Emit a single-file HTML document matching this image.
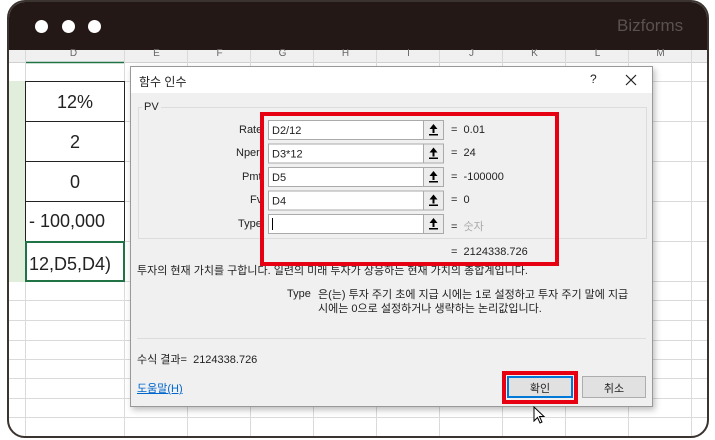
<!DOCTYPE html>
<html><head><meta charset="utf-8"><style>
*{margin:0;padding:0;box-sizing:border-box}
body{width:715px;height:440px;background:#fff;position:relative;overflow:hidden;font-family:"Liberation Sans","Noto Sans CJK KR",sans-serif}
.a{position:absolute}
.frame{left:7px;top:0;width:702px;height:438px;border:2px solid #3a3330;border-radius:18px;overflow:hidden;background:#fff}
.t{font-size:11px;color:#222}
.ch{position:absolute;top:46px;font-size:10px;color:#666;width:63px;text-align:center}
</style></head><body>
<div class="a frame">
 <div class="a" style="left:0;top:0;width:700px;height:48px;background:#231815"></div>
 <div class="a" style="left:26px;top:18px;width:13px;height:13px;border-radius:50%;background:#fff"></div>
 <div class="a" style="left:53px;top:18px;width:13px;height:13px;border-radius:50%;background:#fff"></div>
 <div class="a" style="left:79px;top:18px;width:13px;height:13px;border-radius:50%;background:#fff"></div>
 <div class="a" style="left:608px;top:14px;font-size:17px;color:#5a5250">Bizforms</div>
 <div class="a" style="left:0;top:48px;width:700px;height:13px;background:#f0f0f0;border-bottom:1px solid #d0d0d0"></div>
 <svg class="a" style="left:0;top:48px" width="700" height="390">
  <g stroke="#dadada" stroke-width="1">
   <line x1="115.5" y1="0" x2="115.5" y2="390"/><line x1="178.5" y1="0" x2="178.5" y2="390"/><line x1="241.5" y1="0" x2="241.5" y2="390"/><line x1="304.5" y1="0" x2="304.5" y2="390"/><line x1="367.5" y1="0" x2="367.5" y2="390"/><line x1="430.5" y1="0" x2="430.5" y2="390"/><line x1="493.5" y1="0" x2="493.5" y2="390"/><line x1="556.5" y1="0" x2="556.5" y2="390"/><line x1="619.5" y1="0" x2="619.5" y2="390"/><line x1="682.5" y1="0" x2="682.5" y2="390"/><line x1="16.5" y1="0" x2="16.5" y2="390"/>
   <line x1="0" y1="31.5" x2="700" y2="31.5"/><line x1="0" y1="71.5" x2="700" y2="71.5"/><line x1="0" y1="111.5" x2="700" y2="111.5"/><line x1="0" y1="151.5" x2="700" y2="151.5"/><line x1="0" y1="191.5" x2="700" y2="191.5"/><line x1="0" y1="231.5" x2="700" y2="231.5"/><line x1="0" y1="250.5" x2="700" y2="250.5"/><line x1="0" y1="270.5" x2="700" y2="270.5"/><line x1="0" y1="290.5" x2="700" y2="290.5"/><line x1="0" y1="309.5" x2="700" y2="309.5"/><line x1="0" y1="328.5" x2="700" y2="328.5"/><line x1="0" y1="348.5" x2="700" y2="348.5"/><line x1="0" y1="367.5" x2="700" y2="367.5"/>
  </g>
  <line x1="17" y1="12.5" x2="115" y2="12.5" stroke="#217346" stroke-width="1.5"/>
 </svg>
 <div class="a" style="left:0;top:79px;width:16px;height:201px;background:#e2eedc"></div>
 <div class="a" style="left:16px;top:79px;width:100px;height:161px;border:1px solid #222;background:#fff"></div>
 <div class="a" style="left:16px;top:119px;width:100px;height:1px;background:#222"></div>
 <div class="a" style="left:16px;top:159px;width:100px;height:1px;background:#222"></div>
 <div class="a" style="left:16px;top:199px;width:100px;height:1px;background:#222"></div>
 <div class="a" style="left:16px;top:239px;width:100px;height:41px;border:2px solid #217346;background:#fff"></div>
 <div class="a" style="left:16px;top:90px;width:100px;text-align:center;font-size:18px;color:#222">12%</div>
 <div class="a" style="left:16px;top:130px;width:100px;text-align:center;font-size:18px;color:#222">2</div>
 <div class="a" style="left:16px;top:170px;width:100px;text-align:center;font-size:18px;color:#222">0</div>
 <div class="a" style="left:20px;top:209px;font-size:18px;color:#222">- 100,000</div>
 <div class="a" style="left:20px;top:252px;font-size:18px;color:#222">12,D5,D4)</div>
 <div class="ch" style="left:33px">D</div><div class="ch" style="left:116px">E</div><div class="ch" style="left:179px">F</div><div class="ch" style="left:242px">G</div><div class="ch" style="left:305px">H</div><div class="ch" style="left:368px">I</div><div class="ch" style="left:431px">J</div><div class="ch" style="left:494px">K</div><div class="ch" style="left:557px">L</div><div class="ch" style="left:620px">M</div>
</div>
<div class="a" style="left:130px;top:66px;width:523px;height:341px;background:#f0f0f0;border:1px solid #999;box-shadow:2px 3px 6px rgba(0,0,0,.25)">
 <div class="a" style="left:0;top:0;width:521px;height:26px;background:#fff"></div>
 <div class="a t" style="left:8px;top:6px;font-size:12px">함수 인수</div>
 <div class="a t" style="left:459px;top:5px;font-size:12px">?</div>
 <svg class="a" style="left:494px;top:7px" width="12" height="12"><path d="M1 1L11 11M11 1L1 11" stroke="#222" stroke-width="1.2"/></svg>
 <div class="a" style="left:7px;top:40px;width:509px;height:132px;border:1px solid #dcdcdc"></div>
 <div class="a t" style="left:11px;top:34px;background:#f0f0f0;padding:0 2px">PV</div>
</div>
<div class="a t" style="left:239px;top:124px">Rate</div>
<div class="a t" style="left:236px;top:147px">Nper</div>
<div class="a t" style="left:242px;top:171px">Pmt</div>
<div class="a t" style="left:250px;top:194px">Fv</div>
<div class="a t" style="left:238px;top:218px">Type</div>
<svg class="a" style="left:268px;top:120px" width="176" height="120">
 <g font-family="Liberation Sans" font-size="11" fill="#222">
  <g><rect x="0.5" y="0.5" width="175" height="19" fill="#fff" stroke="#aaa"/><rect x="155.5" y="0.5" width="20" height="19" fill="#ececec" stroke="#aaa"/><text x="4" y="14">D2/12</text></g>
  <g transform="translate(0,23.5)"><rect x="0.5" y="0.5" width="175" height="19" fill="#fff" stroke="#aaa"/><rect x="155.5" y="0.5" width="20" height="19" fill="#ececec" stroke="#aaa"/><text x="4" y="14">D3*12</text></g>
  <g transform="translate(0,47)"><rect x="0.5" y="0.5" width="175" height="19" fill="#fff" stroke="#aaa"/><rect x="155.5" y="0.5" width="20" height="19" fill="#ececec" stroke="#aaa"/><text x="4" y="14">D5</text></g>
  <g transform="translate(0,70.5)"><rect x="0.5" y="0.5" width="175" height="19" fill="#fff" stroke="#aaa"/><rect x="155.5" y="0.5" width="20" height="19" fill="#ececec" stroke="#aaa"/><text x="4" y="14">D4</text></g>
  <g transform="translate(0,94)"><rect x="0.5" y="0.5" width="175" height="19" fill="#fff" stroke="#aaa"/><rect x="155.5" y="0.5" width="20" height="19" fill="#ececec" stroke="#aaa"/><line x1="4.5" y1="4" x2="4.5" y2="16" stroke="#000"/></g>
 </g>
 <g fill="#000"><g id="ar"><path d="M165.5 4 L161.5 9 L164.5 9 L164.5 13 L166.5 13 L166.5 9 L169.5 9 Z"/><rect x="161" y="14" width="9" height="1.5"/></g>
 <use href="#ar" y="23.5"/><use href="#ar" y="47"/><use href="#ar" y="70.5"/><use href="#ar" y="94"/></g>
</svg>
<div class="a t" style="left:451px;top:124px">=&nbsp; 0.01</div>
<div class="a t" style="left:451px;top:147px">=&nbsp; 24</div>
<div class="a t" style="left:451px;top:171px">=&nbsp; -100000</div>
<div class="a t" style="left:451px;top:194px">=&nbsp; 0</div>
<div class="a t" style="left:451px;top:218px">= <span style="color:#aaa">&nbsp;숫자</span></div>
<div class="a t" style="left:451px;top:246px">=&nbsp; 2124338.726</div>
<div class="a t" style="left:137px;top:262px">투자의 현재 가치를 구합니다. 일련의 미래 투자가 상응하는 현재 가치의 총합계입니다.</div>
<div class="a t" style="left:287px;top:288px">Type</div>
<div class="a t" style="left:318px;top:288px;line-height:14px;width:340px">은(는) 투자 주기 초에 지급 시에는 1로 설정하고 투자 주기 말에 지급<br>시에는 0으로 설정하거나 생략하는 논리값입니다.</div>
<div class="a" style="left:137px;top:338px;width:509px;height:1px;background:#dcdcdc"></div>
<div class="a t" style="left:137px;top:351px">수식 결과=&nbsp; 2124338.726</div>
<div class="a t" style="left:137px;top:380px;color:#0066cc;text-decoration:underline">도움말(H)</div>
<div class="a" style="left:507px;top:376px;width:66px;height:22px;background:#e1e1e1;border:2px solid #0078d7"></div>
<div class="a t" style="left:507px;top:380px;width:66px;text-align:center">확인</div>
<div class="a" style="left:582px;top:376px;width:64px;height:22px;background:#e1e1e1;border:1px solid #adadad"></div>
<div class="a t" style="left:582px;top:380px;width:64px;text-align:center">취소</div>
<div class="a" style="left:260px;top:112px;width:299px;height:154px;border:4px solid #e60012"></div>
<div class="a" style="left:502px;top:371px;width:76px;height:33px;border:4px solid #e60012"></div>
<svg class="a" style="left:533px;top:406px" width="14" height="20"><path d="M1 1 L1 15 L4.5 11.5 L7 17 L9 16 L6.5 10.5 L11 10.5 Z" fill="#fff" stroke="#000" stroke-width="1"/></svg>
</body></html>
